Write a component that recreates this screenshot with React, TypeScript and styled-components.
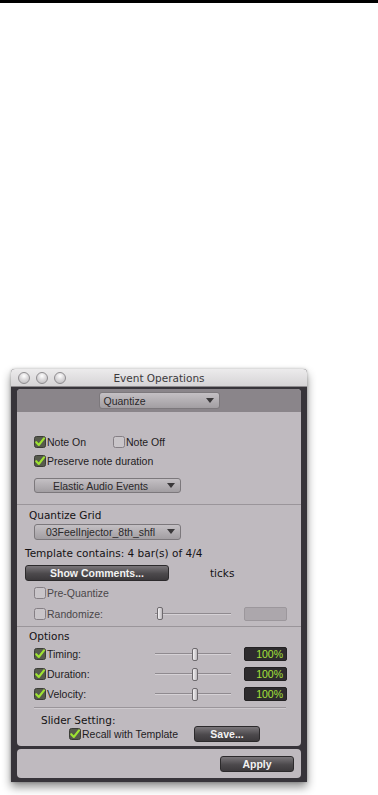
import * as React from 'react';
import styled, { createGlobalStyle } from 'styled-components';

const GlobalStyle = createGlobalStyle`
  html, body {
    margin: 0;
    padding: 0;
    background: #ffffff;
  }
  body {
    font-family: 'Liberation Sans', Arial, sans-serif;
  }
`;

const Page = styled.div`
  width: 378px;
  height: 795px;
  display: flex;
  flex-direction: column;
  overflow: hidden;
`;

const TopRule = styled.div`
  height: 3px;
  background: #000;
`;

const Window = styled.div`
  margin: 366px 0 0 11px;
  width: 296px;
  display: flex;
  flex-direction: column;
  background: #37343a;
  border-radius: 4px 4px 0 0;
  box-shadow: 0 5px 10px rgba(0, 0, 0, 0.45), 0 0 3px rgba(0, 0, 0, 0.25);
`;

const TitleBar = styled.div`
  height: 17px;
  display: flex;
  align-items: center;
  position: relative;
  border-radius: 4px 4px 0 0;
  background: linear-gradient(#ecebec, #d6d4d6);
  border-bottom: 1px solid #8e8b8e;
`;

const Lights = styled.div`
  display: flex;
  gap: 6px;
  padding-left: 7px;
`;

const Light = styled.div`
  width: 10px;
  height: 10px;
  border-radius: 50%;
  border: 1px solid #8f8d90;
  background: radial-gradient(circle at 50% 30%, #ffffff 0%, #dcdadc 45%, #b9b7ba 100%);
`;

const Title = styled.div`
  position: absolute;
  left: 0;
  right: 0;
  text-align: center;
  font-family: 'DejaVu Sans', sans-serif;
  font-size: 10.5px;
  color: #3c3a3c;
  pointer-events: none;
`;

const Frame = styled.div`
  padding: 2px 6px 4px 6px;
  display: flex;
  flex-direction: column;
  gap: 3px;
`;

const Panel = styled.div`
  background: #bfbabf;
  border-radius: 4px;
  overflow: hidden;
  display: flex;
  flex-direction: column;
`;

const HeaderBand = styled.div`
  height: 23px;
  background: #8a858a;
  display: flex;
  align-items: center;
  justify-content: center;
`;

type SectionProps = { $pt: number; $pb: number; $line?: boolean };

const Section = styled.div<SectionProps>`
  display: flex;
  flex-direction: column;
  padding: ${(p) => p.$pt}px 0 ${(p) => p.$pb}px 0;
  border-bottom: ${(p) => (p.$line ? '1px solid #9a959a' : 'none')};
`;

type RowProps = { $h?: number; $mt?: number; $ml?: number };

const Row = styled.div<RowProps>`
  display: flex;
  align-items: center;
  height: ${(p) => p.$h ?? 13}px;
  margin-top: ${(p) => p.$mt ?? 0}px;
  padding-left: ${(p) => p.$ml ?? 17}px;
`;

const Label = styled.span<{ $dim?: boolean }>`
  font-size: 10.5px;
  color: ${(p) => (p.$dim ? '#4a474a' : '#1e1c1e')};
  white-space: nowrap;
`;

const Heading = styled.span`
  font-family: 'DejaVu Sans', sans-serif;
  font-size: 10.5px;
  color: #141214;
  white-space: nowrap;
`;

const CheckItem = styled.div<{ $w?: number }>`
  display: flex;
  align-items: center;
  gap: 1px;
  width: ${(p) => (p.$w ? `${p.$w}px` : 'auto')};
`;

type PopupProps = { $w: number; $h: number; $center?: boolean };

const Popup = styled.div<PopupProps>`
  position: relative;
  width: ${(p) => p.$w}px;
  height: ${(p) => p.$h}px;
  box-sizing: border-box;
  border: 1px solid #7c787c;
  border-radius: 3px;
  background: linear-gradient(#c4c0c4, #a29ea2);
  display: flex;
  align-items: center;
  justify-content: ${(p) => (p.$center ? 'center' : 'flex-start')};
  padding: ${(p) => (p.$center ? '0 14px 0 0' : '0 0 0 4px')};
  font-size: 10.5px;
  color: #2a282a;
  white-space: nowrap;
`;

const Arrow = styled.span`
  position: absolute;
  right: 5px;
  top: 50%;
  margin-top: -3px;
  width: 0;
  height: 0;
  border-left: 4px solid transparent;
  border-right: 4px solid transparent;
  border-top: 5px solid #3a383a;
`;

const DarkButton = styled.div<{ $w: number }>`
  width: ${(p) => p.$w}px;
  height: 16px;
  box-sizing: border-box;
  border: 1px solid #2c2a2c;
  border-radius: 3px;
  background: linear-gradient(#7a767a, #4c494c 55%, #3c393c);
  color: #f2f2f2;
  font-weight: bold;
  font-size: 10.5px;
  display: flex;
  align-items: center;
  justify-content: center;
  white-space: nowrap;
`;

const Slider = styled.div`
  position: relative;
  width: 76px;
  height: 13px;
  display: flex;
  align-items: center;
`;

const Track = styled.div`
  flex: 1;
  height: 1px;
  background: #8f8a8f;
  border-bottom: 1px solid #d6d2d6;
`;

const Thumb = styled.div`
  position: absolute;
  top: 0;
  width: 4px;
  height: 11px;
  border: 1px solid #6e6a6e;
  border-radius: 2px;
  background: linear-gradient(90deg, #f4f2f4, #bcb8bc);
`;

const ValueBox = styled.div<{ $off?: boolean }>`
  width: 43px;
  height: 14px;
  box-sizing: border-box;
  border-radius: 2px;
  background: ${(p) => (p.$off ? '#aca7ac' : '#2e2c2e')};
  border: 1px solid ${(p) => (p.$off ? '#9c979c' : '#232123')};
  color: #a6e33a;
  font-size: 10.5px;
  display: flex;
  align-items: center;
  justify-content: flex-end;
  padding-right: 3px;
`;

const Divider = styled.div`
  height: 1px;
  margin: 6px 15px 0 17px;
  background: #9a959a;
  border-bottom: 1px solid #cfcbcf;
`;

const BottomPanel = styled.div`
  height: 29px;
  background: #bfbabf;
  border-radius: 4px;
  display: flex;
  align-items: center;
  justify-content: flex-end;
  padding-right: 7px;
`;

const Spacer = styled.div<{ $w: number }>`
  width: ${(p) => p.$w}px;
  flex-shrink: 0;
`;

function CheckBox({ checked }: { checked?: boolean }) {
  return (
    <svg width="12" height="12" viewBox="0 0 12 12">
      {checked ? (
        <>
          <rect x="0.5" y="0.5" width="11" height="11" rx="2" fill="#565a4c" stroke="#3b3d36" />
          <path d="M2.2 6.2 L4.8 9 L10 2.4" fill="none" stroke="#9ee332" strokeWidth="2.1" strokeLinecap="round" strokeLinejoin="round" />
        </>
      ) : (
        <rect x="0.5" y="0.5" width="11" height="11" rx="2" fill="#c9c5c9" stroke="#857f85" />
      )}
    </svg>
  );
}

function OptionSlider({ pos }: { pos: number }) {
  return (
    <Slider>
      <Track />
      <Thumb style={{ left: pos }} />
    </Slider>
  );
}

const options = ['Timing:', 'Duration:', 'Velocity:'];

export default function App() {
  return (
    <Page>
      <GlobalStyle />
      <TopRule />
      <Window>
        <TitleBar>
          <Lights>
            <Light />
            <Light />
            <Light />
          </Lights>
          <Title>Event Operations</Title>
        </TitleBar>
        <Frame>
          <Panel>
            <HeaderBand>
              <Popup $w={121} $h={17}>
                Quantize
                <Arrow />
              </Popup>
            </HeaderBand>

            <Section $pt={23} $pb={11} $line>
              <Row>
                <CheckItem $w={79}>
                  <CheckBox checked />
                  <Label>Note On</Label>
                </CheckItem>
                <CheckItem>
                  <CheckBox />
                  <Label>Note Off</Label>
                </CheckItem>
              </Row>
              <Row $mt={6}>
                <CheckItem>
                  <CheckBox checked />
                  <Label>Preserve note duration</Label>
                </CheckItem>
              </Row>
              <Row $h={15} $mt={11}>
                <Popup $w={147} $h={15} $center>
                  Elastic Audio Events
                  <Arrow />
                </Popup>
              </Row>
            </Section>

            <Section $pt={4} $pb={5} $line>
              <Row $h={12} $ml={12}>
                <Heading>Quantize Grid</Heading>
              </Row>
              <Row $h={16} $mt={3}>
                <Popup $w={147} $h={16} $center>
                  03FeelInjector_8th_shfl
                  <Arrow />
                </Popup>
              </Row>
              <Row $h={12} $mt={7} $ml={8}>
                <Heading>Template contains: 4 bar(s) of 4/4</Heading>
              </Row>
              <Row $h={16} $mt={6} $ml={8}>
                <DarkButton $w={144}>Show Comments...</DarkButton>
                <Spacer $w={41} />
                <Heading>ticks</Heading>
              </Row>
              <Row $mt={5}>
                <CheckItem>
                  <CheckBox />
                  <Label $dim>Pre-Quantize</Label>
                </CheckItem>
              </Row>
              <Row $h={15} $mt={7}>
                <CheckItem $w={121}>
                  <CheckBox />
                  <Label $dim>Randomize:</Label>
                </CheckItem>
                <OptionSlider pos={2} />
                <Spacer $w={13} />
                <ValueBox $off />
              </Row>
            </Section>

            <Section $pt={3} $pb={4}>
              <Row $h={12} $ml={12}>
                <Heading>Options</Heading>
              </Row>
              {options.map((o, i) => (
                <Row key={o} $h={14} $mt={i === 0 ? 5 : 6}>
                  <CheckItem $w={121}>
                    <CheckBox checked />
                    <Label>{o}</Label>
                  </CheckItem>
                  <OptionSlider pos={37} />
                  <Spacer $w={13} />
                  <ValueBox>100%</ValueBox>
                </Row>
              ))}
              <Divider />
              <Row $h={12} $mt={5} $ml={24}>
                <Heading>Slider Setting:</Heading>
              </Row>
              <Row $h={16} $ml={52}>
                <CheckItem $w={125}>
                  <CheckBox checked />
                  <Label>Recall with Template</Label>
                </CheckItem>
                <DarkButton $w={66}>Save...</DarkButton>
              </Row>
            </Section>
          </Panel>
          <BottomPanel>
            <DarkButton $w={74}>Apply</DarkButton>
          </BottomPanel>
        </Frame>
      </Window>
    </Page>
  );
}
